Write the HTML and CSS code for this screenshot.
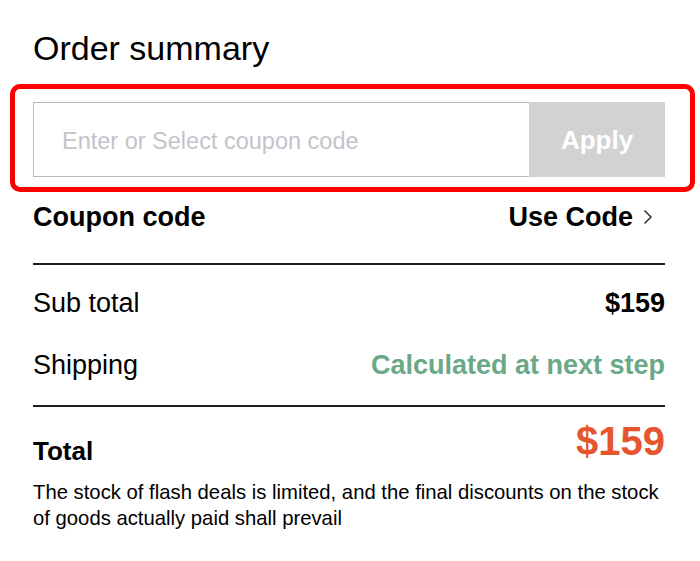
FILE: index.html
```html
<!DOCTYPE html>
<html lang="en">
<head>
    <meta charset="UTF-8">
    <meta name="viewport" content="width=device-width, initial-scale=1.0">
    <title>Order Summary</title>
    <link rel="stylesheet" href="styles.css">
</head>
<body>
    <div class="summary">
        <h2 class="title">Order summary</h2>

        <!-- Coupon input (highlighted) -->
        <div class="coupon-highlight">
            <div class="coupon-form">
                <input type="text" class="coupon-input" placeholder="Enter or Select coupon code">
                <button class="apply-btn">Apply</button>
            </div>
        </div>

        <div class="row coupon-row">
            <span class="label bold">Coupon code</span>
            <span class="use-code">
                <span class="bold">Use Code</span>
                <svg class="chevron" width="10" height="16" viewBox="0 0 10 16">
                    <path d="M1.5 1.5 L8 8 L1.5 14.5" fill="none" stroke="#333" stroke-width="1.5"/>
                </svg>
            </span>
        </div>

        <div class="divider"></div>

        <div class="row line-row first">
            <span class="label">Sub total</span>
            <span class="bold">$159</span>
        </div>
        <div class="row line-row">
            <span class="label">Shipping</span>
            <span class="bold shipping-note">Calculated at next step</span>
        </div>

        <div class="divider lower"></div>

        <div class="row total-row">
            <span class="total-label">Total</span>
            <span class="total-price">$159</span>
        </div>

        <p class="note">The stock of flash deals is limited, and the final discounts on the stock of goods actually paid shall prevail</p>
    </div>
</body>
</html>
```

FILE: styles.css
```css
body {
    margin: 0;
    background: #fff;
    font-family: "Liberation Sans", Arial, sans-serif;
    color: #000;
}

.summary {
    padding: 0 35px 0 33px;
}

.title {
    margin: 28px 0 0;
    font-size: 34px;
    line-height: 40px;
    font-weight: normal;
}

.coupon-highlight {
    margin: 16px -30px 0 -23px;
    padding: 13px 25px 10px 18px;
    border: 5px solid #ff0000;
    border-radius: 10px;
}

.coupon-form {
    display: flex;
    height: 75px;
}

.coupon-input {
    flex: 1;
    min-width: 0;
    margin: 0;
    padding: 3px 0 0 28px;
    border: 1px solid #b9b9b9;
    border-right: none;
    font-family: inherit;
    font-size: 23.5px;
    color: #333;
    outline: none;
}

.coupon-input::placeholder {
    color: #c3c3cb;
}

.apply-btn {
    width: 136px;
    margin: 0;
    padding-top: 2px;
    border: none;
    background-color: #d2d2d2;
    color: #fff;
    font-family: inherit;
    font-size: 26px;
    font-weight: bold;
    cursor: pointer;
}

.row {
    display: flex;
    justify-content: space-between;
    align-items: center;
    font-size: 27px;
}

.bold {
    font-weight: bold;
}

.coupon-row {
    height: 50px;
}

.use-code {
    display: flex;
    align-items: center;
}

.chevron {
    margin: 0 12px 0 10px;
}

.divider {
    height: 2px;
    margin-top: 21px;
    background-color: #1e1e1e;
}

.divider.lower {
    margin-top: 16px;
}

.line-row {
    height: 48px;
    margin-top: 14px;
}

.shipping-note {
    color: #6aa887;
}

.total-row {
    align-items: flex-end;
    margin-top: 9px;
}

.total-label {
    font-weight: bold;
    font-size: 26px;
    line-height: 30px;
}

.total-price {
    font-weight: bold;
    font-size: 40px;
    line-height: 50px;
    color: #e6552d;
}

.note {
    margin: 13px 0 0;
    font-size: 20.3px;
    line-height: 26px;
}
```
